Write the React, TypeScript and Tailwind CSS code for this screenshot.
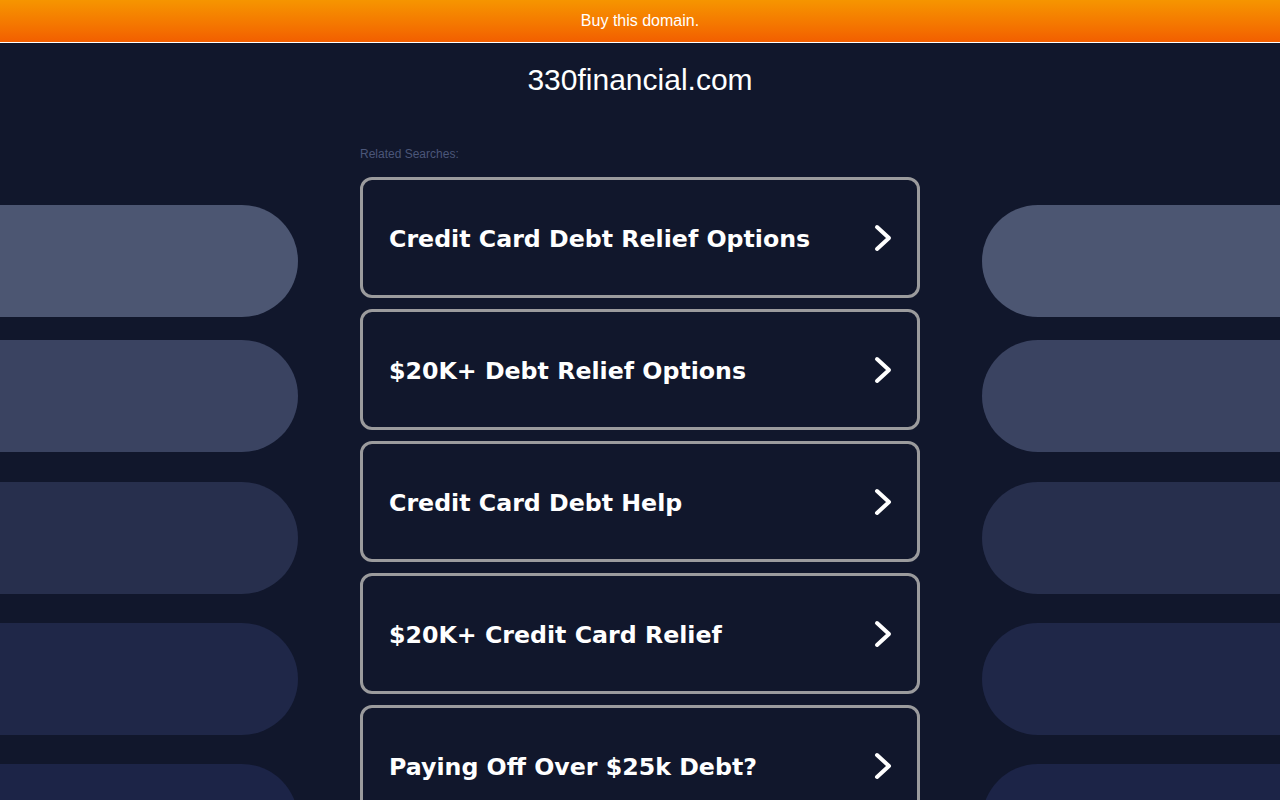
import { useMemo } from 'react';

const searches = [
  'Credit Card Debt Relief Options',
  '$20K+ Debt Relief Options',
  'Credit Card Debt Help',
  '$20K+ Credit Card Relief',
  'Paying Off Over $25k Debt?',
];

// background pills, top to bottom
const pills = [
  { mt: 'mt-[162px]', bg: 'bg-[#4c5672]' },
  { mt: 'mt-[23px]', bg: 'bg-[#3a4361]' },
  { mt: 'mt-[30px]', bg: 'bg-[#272f4d]' },
  { mt: 'mt-[29px]', bg: 'bg-[#1f2748]' },
  { mt: 'mt-[29px]', bg: 'bg-[#1c2447]' },
];

function Chevron() {
  return (
    <svg width="20" height="30" viewBox="0 0 20 30" fill="none">
      <path d="M4 4 L16 15 L4 26" stroke="white" strokeWidth="4" strokeLinecap="round" strokeLinejoin="round" />
    </svg>
  );
}

function PillColumn({ side }: { side: 'left' | 'right' }) {
  return (
    <div className="flex flex-col">
      {pills.map((p, i) => (
        <div
          key={i}
          className={`${p.mt} ${p.bg} h-[112px] shrink-0 ${side === 'left' ? 'rounded-r-[56px]' : 'rounded-l-[56px]'}`}
        />
      ))}
    </div>
  );
}

export default function App() {
  const items = useMemo(() => searches, []);
  return (
    <div className="h-[800px] overflow-hidden bg-[#11172c] font-['Liberation_Sans',Arial,sans-serif]">
      {/* Top banner */}
      <div className="h-[43px] border-b border-white bg-gradient-to-b from-[#f69500] to-[#f25e00] flex items-center justify-center text-white text-[16px]">
        Buy this domain.
      </div>

      <div className="grid grid-cols-[298px_1fr_298px]">
        <PillColumn side="left" />

        <div className="flex flex-col items-center">
          <h1 className="mt-[19px] text-[30px] leading-[36px] text-white">330financial.com</h1>

          <div className="w-[560px] mt-[49px]">
            <div className="text-[12px] leading-[14px] text-[#4b5679]">Related Searches:</div>
            <div className="mt-[16px] flex flex-col gap-[11px]">
              {items.map((s) => (
                <a
                  key={s}
                  href="#"
                  className="h-[121px] shrink-0 rounded-[12px] border-[3px] border-[#9b9b9d] flex items-center justify-between pl-[26px] pr-[24px]"
                >
                  <span className="pt-[4px] font-['DejaVu_Sans',Verdana,sans-serif] font-bold text-[23.7px] text-white">{s}</span>
                  <Chevron />
                </a>
              ))}
            </div>
          </div>
        </div>

        <PillColumn side="right" />
      </div>
    </div>
  );
}
